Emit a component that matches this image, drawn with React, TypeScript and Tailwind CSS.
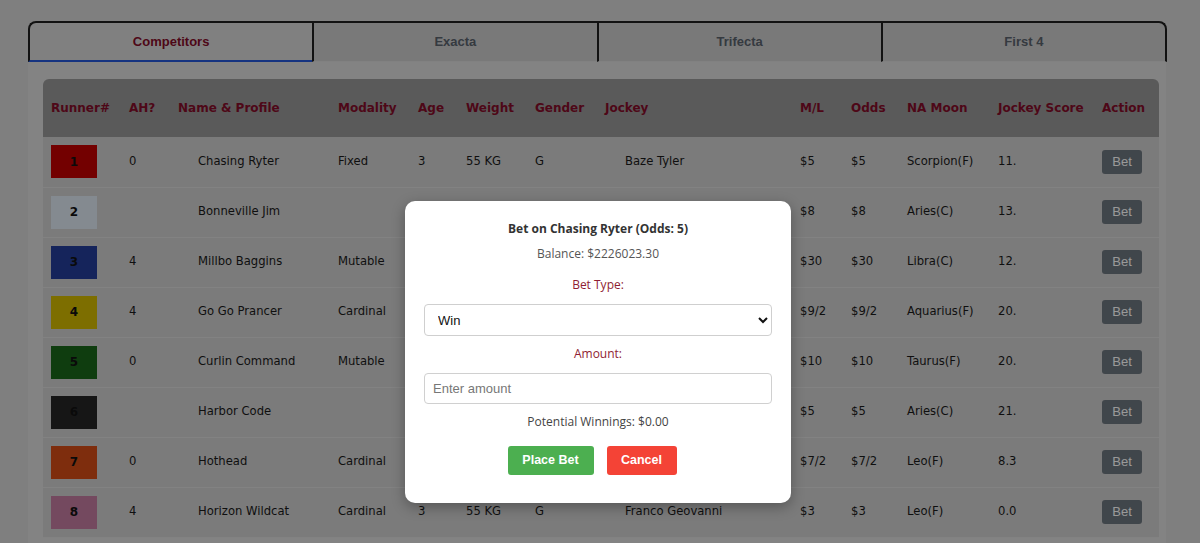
import React from "react";

type Row = {
  n: number;
  color: string;
  ah: string;
  name: string;
  mod: string;
  age: string;
  weight: string;
  gender: string;
  jockey: string;
  ml: string;
  odds: string;
  moon: string;
  score: string;
};

const rows: Row[] = [
  { n: 1, color: "bg-[#c00000]", ah: "0", name: "Chasing Ryter", mod: "Fixed", age: "3", weight: "55 KG", gender: "G", jockey: "Baze Tyler", ml: "$5", odds: "$5", moon: "Scorpion(F)", score: "11." },
  { n: 2, color: "bg-[#dce6f0]", ah: "", name: "Bonneville Jim", mod: "", age: "", weight: "", gender: "", jockey: "", ml: "$8", odds: "$8", moon: "Aries(C)", score: "13." },
  { n: 3, color: "bg-[#233d98]", ah: "4", name: "Millbo Baggins", mod: "Mutable", age: "3", weight: "55 KG", gender: "G", jockey: "Hector Berrios", ml: "$30", odds: "$30", moon: "Libra(C)", score: "12." },
  { n: 4, color: "bg-[#d0b800]", ah: "4", name: "Go Go Prancer", mod: "Cardinal", age: "3", weight: "55 KG", gender: "G", jockey: "Juan Hernandez", ml: "$9/2", odds: "$9/2", moon: "Aquarius(F)", score: "20." },
  { n: 5, color: "bg-[#1a661a]", ah: "0", name: "Curlin Command", mod: "Mutable", age: "3", weight: "55 KG", gender: "G", jockey: "Umberto Rispoli", ml: "$10", odds: "$10", moon: "Taurus(F)", score: "20." },
  { n: 6, color: "bg-[#262626]", ah: "", name: "Harbor Code", mod: "", age: "", weight: "", gender: "", jockey: "", ml: "$5", odds: "$5", moon: "Aries(C)", score: "21." },
  { n: 7, color: "bg-[#d24c17]", ah: "0", name: "Hothead", mod: "Cardinal", age: "3", weight: "55 KG", gender: "G", jockey: "Flavien Prat", ml: "$7/2", odds: "$7/2", moon: "Leo(F)", score: "8.3" },
  { n: 8, color: "bg-[#c27a9e]", ah: "4", name: "Horizon Wildcat", mod: "Cardinal", age: "3", weight: "55 KG", gender: "G", jockey: "Franco Geovanni", ml: "$3", odds: "$3", moon: "Leo(F)", score: "0.0" },
];

const tabs = ["Competitors", "Exacta", "Trifecta", "First 4"];

export default function App() {
  return (
    <div className="relative h-[543px] w-full overflow-hidden bg-[#d4d4d4] [font-family:'DejaVu_Sans',sans-serif]">
      {/* Tabs */}
      <div className="ml-[28px] w-[1139px] pt-[21px]">
        <div className="flex h-[41px]">
          {tabs.map((t, i) => {
            const active = i === 0;
            return (
              <div
                key={t}
                className={[
                  "flex flex-1 items-center justify-center border-t-2 border-l-2 border-[#1f1f1f] text-[13px] font-bold [font-family:'Liberation_Sans',Arial,sans-serif]",
                  i === 0 ? "rounded-tl-lg border-l" : "",
                  i === tabs.length - 1 ? "rounded-tr-lg border-r-2" : "",
                  active
                    ? "border-b-2 border-b-[#2456d6] bg-[#d6d6d6] text-[#820c28]"
                    : "border-b border-b-[#d8d8d8] bg-[#cacaca] text-[#59616b]",
                ].join(" ")}
              >
                {t}
              </div>
            );
          })}
        </div>
        {/* Panel */}
        <div className="mr-[1px] bg-[#dbdbdb] pb-4 pl-[15px] pr-[7px] pt-[17px]">
          <table className="w-[1116px] table-fixed border-collapse text-left">
            <thead>
              <tr className="h-[58px] bg-[#969696] text-[12px] font-bold text-[#820c28]">
                <th className="w-[78px] rounded-tl-md pl-2 font-bold">Runner#</th>
                <th className="w-[49px] pl-2 font-bold">AH?</th>
                <th className="w-[160px] pl-2 font-bold">Name &amp; Profile</th>
                <th className="w-[80px] pl-2 font-bold">Modality</th>
                <th className="w-[48px] pl-2 font-bold">Age</th>
                <th className="w-[69px] pl-2 font-bold">Weight</th>
                <th className="w-[70px] pl-2 font-bold">Gender</th>
                <th className="w-[195px] pl-2 font-bold">Jockey</th>
                <th className="w-[51px] pl-2 font-bold">M/L</th>
                <th className="w-[56px] pl-2 font-bold">Odds</th>
                <th className="w-[91px] pl-2 font-bold">NA Moon</th>
                <th className="w-[104px] pl-2 font-bold">Jockey Score</th>
                <th className="w-[65px] rounded-tr-md pl-2 font-bold">Action</th>
              </tr>
            </thead>
            <tbody className="text-[11.6px] text-[#1a1a1a]">
              {rows.map((r) => (
                <tr key={r.n} className="h-[50px] border-b border-[#d9d9d9] bg-[#cdcdcd]">
                  <td className="pl-2">
                    <div className={`flex h-[33px] w-[46px] items-center justify-center text-[12px] font-bold text-[#111] ${r.color}`}>
                      {r.n}
                    </div>
                  </td>
                  <td className="pl-2">{r.ah}</td>
                  <td className="pl-[28px]">{r.name}</td>
                  <td className="pl-2">{r.mod}</td>
                  <td className="pl-2">{r.age}</td>
                  <td className="pl-2">{r.weight}</td>
                  <td className="pl-2">{r.gender}</td>
                  <td className="pl-[28px]">{r.jockey}</td>
                  <td className="pl-2">{r.ml}</td>
                  <td className="pl-2">{r.odds}</td>
                  <td className="pl-2">{r.moon}</td>
                  <td className="pl-2">{r.score}</td>
                  <td className="pl-2">
                    <button className="h-[24px] w-[40px] rounded-[3px] bg-[#6c757d] text-[13px] text-white [font-family:'Liberation_Sans',Arial,sans-serif]">
                      Bet
                    </button>
                  </td>
                </tr>
              ))}
            </tbody>
          </table>
        </div>
      </div>

      {/* Overlay */}
      <div className="absolute inset-0 flex justify-center bg-black/40 pt-[201px]">
        <div className="ml-[-4px] flex h-[302px] w-[386px] flex-col items-center rounded-[10px] bg-white px-[19px] pt-[19px] shadow-[0_4px_14px_rgba(0,0,0,0.3)] [font-family:'Open_Sans',sans-serif]">
          <div className="h-[18px] text-[12px] font-bold leading-[18px] text-[#333]">Bet on Chasing Ryter (Odds: 5)</div>
          <div className="mt-[7px] h-[18px] text-[12px] leading-[18px] text-[#555]">Balance: $2226023.30</div>
          <div className="mt-[13px] h-[18px] text-[12px] leading-[18px] text-[#8f1d33]">Bet Type:</div>
          <select className="mt-[10px] h-[32px] w-full rounded-[4px] border border-[#cfcfcf] bg-white pl-[9px] pr-2 text-[13px] text-[#111] [font-family:'Liberation_Sans',Arial,sans-serif]">
            <option>Win</option>
          </select>
          <div className="mt-[9px] h-[18px] text-[12px] leading-[18px] text-[#8f1d33]">Amount:</div>
          <input
            placeholder="Enter amount"
            className="mt-[10px] h-[31px] w-full rounded-[4px] border border-[#d0d0d0] px-[8px] text-[13px] text-[#111] placeholder:text-[#777] [font-family:'Liberation_Sans',Arial,sans-serif]"
          />
          <div className="mt-[9px] h-[18px] text-[12px] leading-[18px] text-[#444]">Potential Winnings: $0.00</div>
          <div className="mr-[12px] mt-[15px] flex gap-[13px]">
            <button className="h-[29px] w-[86px] rounded-[3px] bg-[#4caf50] text-[12.5px] font-semibold text-white [font-family:'Liberation_Sans',Arial,sans-serif]">
              Place Bet
            </button>
            <button className="h-[29px] w-[70px] rounded-[3px] bg-[#f44336] text-[12.5px] font-semibold text-white [font-family:'Liberation_Sans',Arial,sans-serif]">
              Cancel
            </button>
          </div>
        </div>
      </div>
    </div>
  );
}
